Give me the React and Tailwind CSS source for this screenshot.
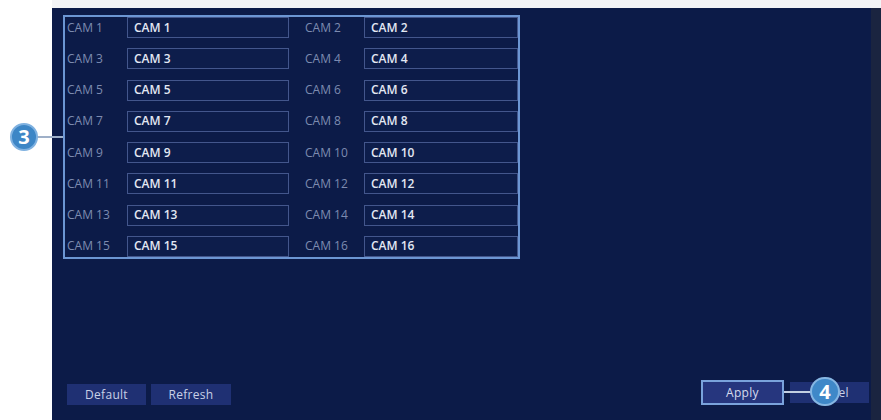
import React from "react";

const pairs = [1, 3, 5, 7, 9, 11, 13, 15];

const Field = ({ label, value, labelW, inputW }) => (
  <>
    <div className={`${labelW} pl-[2px] text-[#7d8bb0]`}>{label}</div>
    <div
      className={`${inputW} h-[21px] flex items-center pl-[6px] border border-[#43568c] bg-[#0d1d4b] text-[#e3e8f3] font-semibold`}
    >
      {value}
    </div>
  </>
);

const Button = ({ children, className = "" }) => (
  <div
    className={`h-[21px] w-[79px] flex items-center justify-center bg-[#1f3073] text-[#c8d0e6] tracking-[0.3px] ${className}`}
  >
    {children}
  </div>
);

export default function App() {
  return (
    <div
      className="relative w-[881px] h-[420px] bg-white flex overflow-hidden text-[12px]"
      style={{ fontFamily: '"Open Sans", "Liberation Sans", sans-serif' }}
    >
      <div className="w-[52px] shrink-0" />
      <div className="flex-1 flex flex-col">
        <div className="h-[8px] bg-[#f3f4f6]" />
        <div className="flex-1 flex">
          <div className="flex-1 bg-[#0c1b48] flex flex-col pl-[11px] pt-[7px] pb-[15px] pr-[2px]">
            {/* channel name group */}
            <div className="w-[457px] h-[244px] border-2 border-[#6c96d3] flex flex-col justify-between">
              {pairs.map((n) => (
                <div key={n} className="flex items-center">
                  <Field label={`CAM ${n}`} value={`CAM ${n}`} labelW="w-[62px]" inputW="w-[162px]" />
                  <div className="w-[14px]" />
                  <Field label={`CAM ${n + 1}`} value={`CAM ${n + 1}`} labelW="w-[61px]" inputW="w-[154px]" />
                </div>
              ))}
            </div>

            <div className="flex-1" />

            <div className="flex items-end justify-between">
              <div className="flex gap-[5px] pl-[4px]">
                <Button>Default</Button>
                <Button className="w-[80px]">Refresh</Button>
              </div>
              <div className="flex items-center gap-[6px]">
                <div className="border-2 border-[#7aa3dc]">
                  <Button className="w-[75px] bg-[#26367e] text-[#d6dcee]">Apply</Button>
                </div>
                <Button>Cancel</Button>
              </div>
            </div>
          </div>
          <div className="w-[10px] bg-[#1a2440]" />
        </div>
      </div>

      {/* callout 3 */}
      <div className="absolute left-[37px] top-[136px] w-[26px] h-[2px] bg-[#9fb0c8]" />
      <div className="absolute left-[10px] top-[123px] w-[28px] h-[28px] rounded-full bg-[#3d86c6] border-2 border-[#7fb1e0] flex items-center justify-center text-white font-bold text-[20px] leading-none">
        3
      </div>

      {/* callout 4 */}
      <div className="absolute left-[784px] top-[391px] w-[28px] h-[2px] bg-[#c3cfe2]" />
      <div className="absolute left-[810px] top-[377px] w-[30px] h-[29px] rounded-full bg-[#3f88c8] border-2 border-[#86b6e2] flex items-center justify-center text-white font-bold text-[20px] leading-none">
        4
      </div>
    </div>
  );
}
